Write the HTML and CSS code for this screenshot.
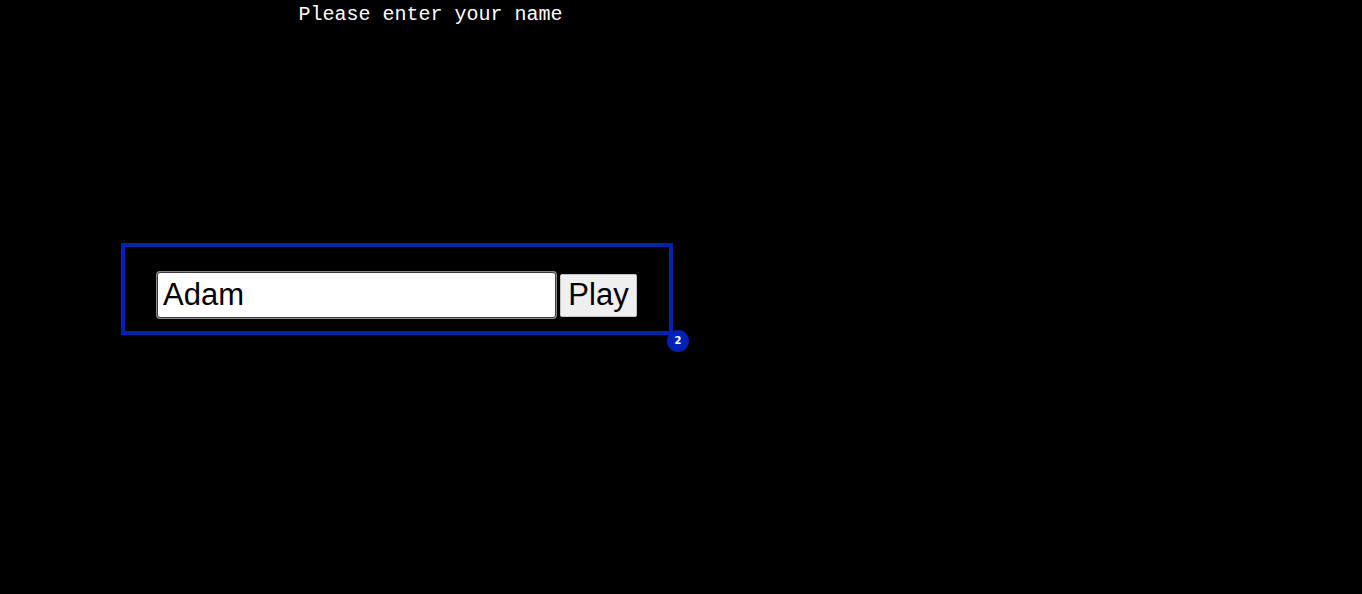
FILE: index.html
```html
<!DOCTYPE html>
<html>
<head>
<meta charset="utf-8">
<title>Enter name</title>
<link rel="stylesheet" href="styles.css">
</head>
<body>
<div class="page">
  <div class="prompt">Please enter your name</div>
  <div class="panel">
    <input class="name-input" type="text" value="Adam">
    <button class="play-btn" type="button">Play</button>
    <span class="badge">2</span>
  </div>
</div>
</body>
</html>
```
FILE: styles.css
```css
html, body {
  margin: 0;
  padding: 0;
  background: #000;
  min-height: 100%;
}
.page {
  width: 861px;
  min-height: 594px;
  display: flex;
  flex-direction: column;
  align-items: flex-start;
}
.prompt {
  align-self: stretch;
  margin-top: 3px;
  text-align: center;
  color: #fff;
  font-family: "Liberation Mono", "Courier New", monospace;
  font-size: 20px;
  line-height: 23px;
}
.panel {
  position: relative;
  margin-top: 217px;
  margin-left: 121px;
  box-sizing: border-box;
  width: 552px;
  height: 92px;
  border: 4px solid #0022b4;
  display: flex;
  align-items: center;
  gap: 4px;
  padding: 12px 0 0 32px;
}
.name-input {
  box-sizing: border-box;
  width: 399px;
  height: 46px;
  margin: 0;
  padding: 0 0 0 5px;
  border: 1px solid #3a3a3a;
  border-radius: 3px;
  box-shadow: inset 0 0 0 1px #fff, 0 0 0 1px #8a8a8a;
  background: #fff;
  color: #000;
  font-family: "Liberation Sans", Arial, sans-serif;
  font-size: 31px;
  outline: none;
}
.play-btn {
  box-sizing: border-box;
  width: 77px;
  height: 43px;
  margin: 0;
  padding: 0;
  border: 1px solid #c4c4c4;
  border-radius: 2px;
  background: #efefef;
  color: #000;
  font-family: "Liberation Sans", Arial, sans-serif;
  font-size: 31px;
}
.badge {
  position: absolute;
  z-index: 5;
  left: 542px;
  top: 83px;
  width: 22px;
  height: 22px;
  border-radius: 50%;
  background: #0022b4;
  color: #fff;
  font-family: "DejaVu Sans", sans-serif;
  font-weight: bold;
  font-size: 10px;
  line-height: 22px;
  text-align: center;
}
```
